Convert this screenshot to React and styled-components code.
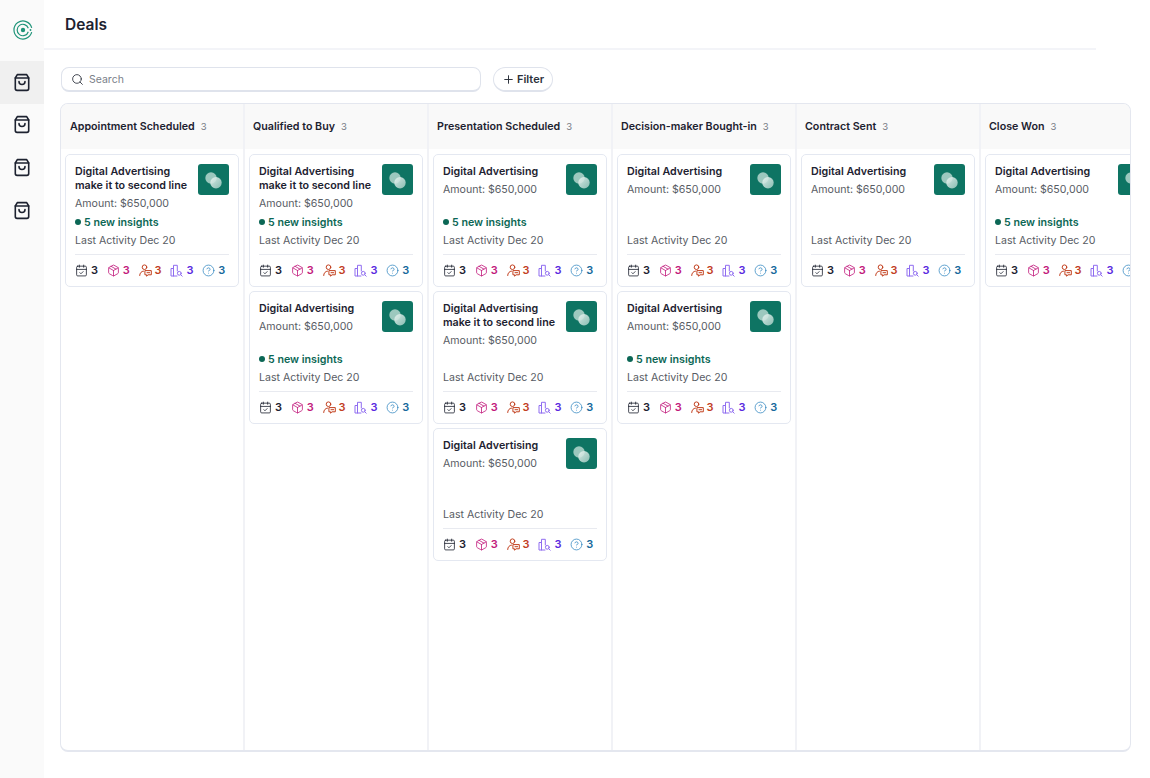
import styled, { createGlobalStyle } from 'styled-components';
import { CalendarCheck, Package, CircleHelp, Search, Plus } from 'lucide-react';

const GlobalStyle = createGlobalStyle`
  html, body {
    margin: 0;
    padding: 0;
    background: #fff;
    font-family: Inter, "Liberation Sans", sans-serif;
    overflow: hidden;
  }
  * { box-sizing: border-box; }
`;

const Page = styled.div`
  display: flex;
  width: 1150px;
  height: 778px;
`;

const Sidebar = styled.aside`
  width: 44px;
  flex: none;
  background: #fafafa;
  display: flex;
  flex-direction: column;
`;

const LogoBox = styled.div`
  height: 61px;
  padding: 0 0 2px 2px;
  display: flex;
  align-items: center;
  justify-content: center;
`;

const SideItem = styled.div`
  height: 42.6px;
  display: flex;
  align-items: center;
  justify-content: center;
  background: ${(p) => (p.$active ? '#f0f0f0' : 'transparent')};
`;

const Main = styled.main`
  flex: 1;
  min-width: 0;
  display: flex;
  flex-direction: column;
`;

const Header = styled.header`
  width: 1052px;
  height: 50px;
  padding: 15px 0 0 21px;
  border-bottom: 2px solid #f3f4f8;
`;

const Title = styled.h1`
  margin: 0;
  font-size: 15.5px;
  line-height: 20px;
  font-weight: 600;
  color: #1d2230;
`;

const Toolbar = styled.div`
  display: flex;
  align-items: center;
  gap: 12px;
  padding: 17px 0 0 17px;
`;

const SearchBox = styled.div`
  width: 420px;
  height: 25px;
  display: flex;
  align-items: center;
  gap: 5px;
  padding: 0 9px;
  border: 1px solid #dfe3ec;
  border-bottom-width: 2px;
  border-radius: 8px;
  color: #7a7f8a;
  font-size: 10.5px;
  svg { color: #2b303b; }
`;

const FilterButton = styled.button`
  width: 60px;
  height: 25px;
  display: flex;
  align-items: center;
  justify-content: center;
  gap: 2px;
  padding: 0;
  background: #fff;
  border: 1px solid #dfe3ec;
  border-bottom-width: 2px;
  border-radius: 13px;
  font-family: inherit;
  font-size: 11px;
  font-weight: 600;
  color: #2b303b;
`;

const Board = styled.section`
  margin: 11px 0 0 16px;
  width: 1071px;
  height: 649px;
  display: flex;
  overflow: hidden;
  border: 1px solid #e4e7ef;
  border-bottom-width: 2px;
  border-radius: 8px;
`;

const Column = styled.div`
  width: 184px;
  flex: none;
  display: flex;
  flex-direction: column;
  border-right: 2px solid #f1f2f6;
`;

const ColumnHead = styled.div`
  height: 45px;
  flex: none;
  display: flex;
  align-items: center;
  gap: 6px;
  padding-left: 8px;
  background: #f9f9f9;
  ${Column}:first-child & { padding-left: 9px; }
`;

const ColumnName = styled.span`
  font-size: 10.7px;
  font-weight: 600;
  color: #1d2230;
  white-space: nowrap;
`;

const ColumnCount = styled.span`
  font-size: 9.5px;
  color: #777b85;
`;

const CardList = styled.div`
  display: flex;
  flex-direction: column;
  gap: 4px;
  padding: 5px 0 0 4px;
`;

const Card = styled.article`
  width: 174px;
  height: 133px;
  flex: none;
  display: flex;
  flex-direction: column;
  padding: 9px 9px 0;
  border: 1px solid #e4e8f1;
  border-radius: 5px;
  background: #fff;
`;

const CardTop = styled.div`
  height: 49px;
  display: flex;
  justify-content: space-between;
`;

const CardText = styled.div`
  display: flex;
  flex-direction: column;
  padding-top: 1px;
`;

const CardTitle = styled.div`
  font-size: 10.7px;
  line-height: 14px;
  font-weight: 600;
  color: #1d2230;
  white-space: pre-line;
`;

const Amount = styled.div`
  margin-top: 4px;
  font-size: 10.6px;
  line-height: 14px;
  color: #585c64;
`;

const Thumb = styled.div`
  width: 31px;
  height: 31px;
  flex: none;
  display: flex;
  align-items: center;
  justify-content: center;
  border-radius: 3px;
  background: #0e7463;
`;

const Insights = styled.div`
  height: 14px;
  margin-top: 2px;
  display: flex;
  align-items: center;
  gap: 3px;
  font-size: 10.7px;
  font-weight: 600;
  color: #0b6755;
  visibility: ${(p) => (p.$show ? 'visible' : 'hidden')};
`;

const Dot = styled.span`
  width: 6px;
  height: 6px;
  border-radius: 50%;
  background: #0b6755;
`;

const LastActivity = styled.div`
  margin-top: 5px;
  font-size: 10.6px;
  line-height: 14px;
  color: #585c64;
`;

const Divider = styled.div`
  margin-top: 6px;
  height: 1px;
  background: #e8eaf0;
`;

const Stats = styled.div`
  display: flex;
  gap: 9.8px;
  margin-top: 8px;
`;

const Stat = styled.div`
  width: 22px;
  flex: none;
  display: flex;
  align-items: center;
  gap: 3px;
  font-size: 11px;
  line-height: 14px;
  font-weight: 600;
  color: ${(p) => p.$color};
  svg { color: ${(p) => p.$iconColor}; flex: none; }
`;

const BagIcon = () => (
  <svg width="18" height="19" viewBox="0 0 18 19" fill="none" stroke="#1d2230" strokeWidth="1.6" strokeLinecap="round" strokeLinejoin="round">
    <path d="M4.300 1.600h9.400l2 3.400v10.600a1.800 1.800 0 0 1-1.800 1.800H4.100a1.800 1.800 0 0 1-1.800-1.800V5z" />
    <path d="M2.300 5h13.400" />
    <path d="M6 8.500a3 3 0 0 0 6 0" />
  </svg>
);

const LogoIcon = () => (
  <svg width="20" height="20" viewBox="0 0 20 20" fill="none" stroke="#1f9479" strokeWidth="1.2">
    <path d="M18.700 7.800A9 9 0 1 0 18.700 12.200" />
    <path d="M15.300 8.300A5.700 5.700 0 1 0 15.300 11.700" />
    <circle cx="10" cy="10" r="2.200" fill="#1f9479" stroke="none" />
    <circle cx="17.500" cy="10" r="0.900" fill="#1f9479" stroke="none" />
  </svg>
);

const ThumbArt = () => (
  <svg width="24" height="24" viewBox="0 0 24 24">
    <defs>
      <linearGradient id="thumbFade" x1="0" y1="0" x2="1" y2="1">
        <stop offset="0" stopColor="#e6f1ee" stopOpacity="0.95" />
        <stop offset="1" stopColor="#a9d0c7" stopOpacity="0.8" />
      </linearGradient>
    </defs>
    <circle cx="9" cy="10" r="5.700" fill="#9cc8be" />
    <circle cx="14" cy="14.700" r="5.700" fill="url(#thumbFade)" />
  </svg>
);

const PersonChatIcon = () => (
  <svg width="13" height="13" viewBox="0 0 13 13" fill="none" stroke="currentColor" strokeWidth="1" strokeLinecap="round" strokeLinejoin="round">
    <circle cx="5.500" cy="3.200" r="2.300" />
    <path d="M0.700 11.500c0-2.500 1.700-4.200 3.800-4.400" />
    <path d="M6.300 6.600h6v4.200H9l-1.400 1.400v-1.400H6.300z" />
    <path d="M8 8.700h2.600" />
  </svg>
);

const BuildingSearchIcon = () => (
  <svg width="13" height="13" viewBox="0 0 13 13" fill="none" stroke="currentColor" strokeWidth="1" strokeLinecap="round" strokeLinejoin="round">
    <path d="M3.500 4.500H1V12h6" />
    <path d="M3.500 12V1.300h3.800V7" />
    <circle cx="9.300" cy="9.300" r="1.900" />
    <path d="M10.700 10.700l1.500 1.500" />
  </svg>
);

const stats = [
  { icon: <CalendarCheck size={13} strokeWidth={1.5} />, color: '#1d2230', iconColor: '#1d2230' },
  { icon: <Package size={13} strokeWidth={1.5} />, color: '#c21a7c', iconColor: '#c21a7c' },
  { icon: <PersonChatIcon />, color: '#c2401f', iconColor: '#c2401f' },
  { icon: <BuildingSearchIcon />, color: '#5a2ae0', iconColor: '#8f6cf0' },
  { icon: <CircleHelp size={13} strokeWidth={1.4} />, color: '#17699c', iconColor: '#2f86c0' },
];

const columns = [
  { name: 'Appointment Scheduled', cards: [{ two: true, insights: true }] },
  { name: 'Qualified to Buy', cards: [{ two: true, insights: true }, { insights: true }] },
  { name: 'Presentation Scheduled', cards: [{ insights: true }, { two: true }, {}] },
  { name: 'Decision-maker Bought-in', cards: [{}, { insights: true }] },
  { name: 'Contract Sent', cards: [{}] },
  { name: 'Close Won', cards: [{ insights: true }] },
];

const DealCard = ({ two, insights }) => (
  <Card>
    <CardTop>
      <CardText>
        <CardTitle>{two ? 'Digital Advertising\nmake it to second line' : 'Digital Advertising'}</CardTitle>
        <Amount>Amount: $650,000</Amount>
      </CardText>
      <Thumb><ThumbArt /></Thumb>
    </CardTop>
    <Insights $show={insights}><Dot />5 new insights</Insights>
    <LastActivity>Last Activity Dec 20</LastActivity>
    <Divider />
    <Stats>
      {stats.map((s, i) => (
        <Stat key={i} $color={s.color} $iconColor={s.iconColor}>{s.icon}3</Stat>
      ))}
    </Stats>
  </Card>
);

export default function App() {
  return (
    <>
      <GlobalStyle />
      <Page>
        <Sidebar>
          <LogoBox><LogoIcon /></LogoBox>
          <SideItem $active><BagIcon /></SideItem>
          <SideItem><BagIcon /></SideItem>
          <SideItem><BagIcon /></SideItem>
          <SideItem><BagIcon /></SideItem>
        </Sidebar>
        <Main>
          <Header><Title>Deals</Title></Header>
          <Toolbar>
            <SearchBox><Search size={13} strokeWidth={1.6} />Search</SearchBox>
            <FilterButton><Plus size={13} strokeWidth={1.8} />Filter</FilterButton>
          </Toolbar>
          <Board>
            {columns.map((col) => (
              <Column key={col.name}>
                <ColumnHead>
                  <ColumnName>{col.name}</ColumnName>
                  <ColumnCount>3</ColumnCount>
                </ColumnHead>
                <CardList>
                  {col.cards.map((c, i) => <DealCard key={i} {...c} />)}
                </CardList>
              </Column>
            ))}
          </Board>
        </Main>
      </Page>
    </>
  );
}
